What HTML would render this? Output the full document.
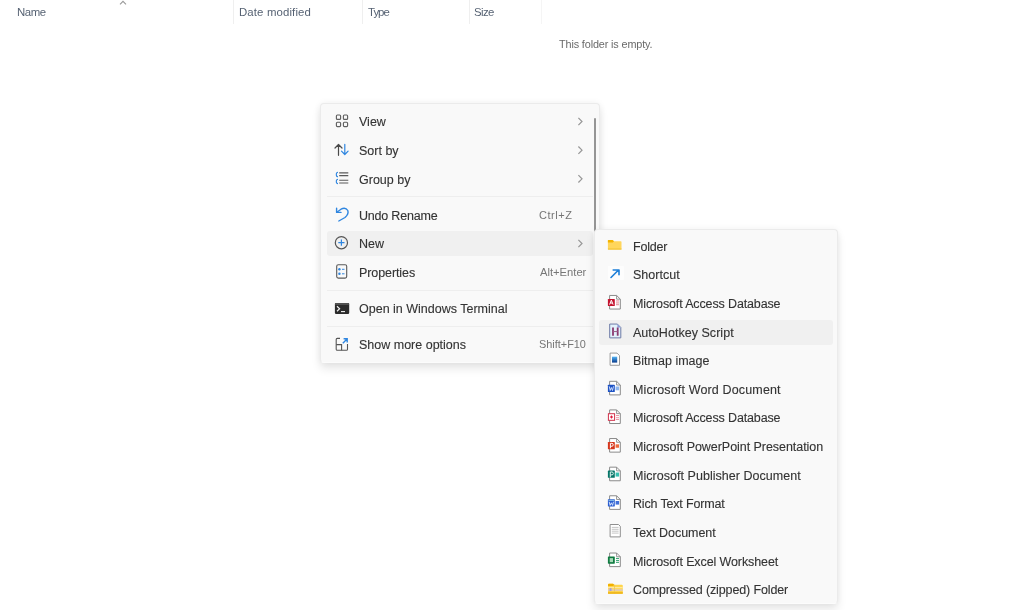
<!DOCTYPE html>
<html><head><meta charset="utf-8">
<style>
*{margin:0;padding:0;box-sizing:border-box}
html,body{width:1024px;height:610px;overflow:hidden;background:#fff;font-family:"Liberation Sans",sans-serif}
.txt,.sc,.hdr,.empty{will-change:transform}
.abs{position:absolute}
.hdr{position:absolute;top:4px;font-size:11.4px;line-height:16px;color:#566273;white-space:nowrap}
.col{position:absolute;top:0;width:1px;height:24px;background:#efefef}
.empty{position:absolute;left:558.5px;top:37.4px;letter-spacing:-0.13px;font-size:10.85px;line-height:14px;color:#6a6a6a;white-space:nowrap}
.menu{position:absolute;background:#f9f9f9;border-radius:4px;border:1px solid #ebebeb;border-bottom-color:#fcfcfc;box-shadow:0 0 7px rgba(0,0,0,0.06),0 6px 10px rgba(0,0,0,0.09)}
.hl{position:absolute;height:25px;border-radius:3px;background:#f0f0f0}
.txt{position:absolute;font-size:12.5px;line-height:25px;height:25px;color:#333333;-webkit-text-stroke:0.12px #333333;white-space:nowrap}
.sc{position:absolute;font-size:11px;line-height:25px;height:25px;color:#767676;white-space:nowrap}
.sep{position:absolute;height:1px;background:#eeeeee}
svg{position:absolute;overflow:visible}
</style></head>
<body>
<div class="hdr" style="left:17px;letter-spacing:-0.4px">Name</div>
<svg style="left:0;top:0" width="200" height="10"><path d="M120 4.4 L123 1.4 L126 4.4" fill="none" stroke="#999" stroke-width="1.1"/></svg>
<div class="col" style="left:233px"></div>
<div class="hdr" style="left:238.5px;letter-spacing:0.13px">Date modified</div>
<div class="col" style="left:362px"></div>
<div class="hdr" style="left:367.5px;letter-spacing:-0.95px">Type</div>
<div class="col" style="left:469px"></div>
<div class="hdr" style="left:474px;letter-spacing:-0.6px">Size</div>
<div class="col" style="left:541px;background:#f5f5f5"></div>
<div class="empty">This folder is empty.</div>

<div class="menu" style="left:320px;top:103px;width:280px;height:260px"></div>
<div class="abs" style="left:594.4px;top:117.5px;width:2px;height:114.5px;background:#959595;border-radius:1px"></div>
<div class="txt" style="left:359px;top:110.20px;letter-spacing:0.000px">View</div>
<div class="txt" style="left:359px;top:138.90px;letter-spacing:0.000px">Sort by</div>
<div class="txt" style="left:359px;top:167.50px;letter-spacing:0.000px">Group by</div>
<div class="txt" style="left:359px;top:203.50px;letter-spacing:-0.200px">Undo Rename</div>
<div class="sc" style="left:539.5px;top:202.60px;letter-spacing:0.55px;margin-left:-1px">Ctrl+Z</div>
<div class="hl" style="left:327px;top:231.20px;width:266px"></div>
<div class="txt" style="left:359px;top:232.20px;letter-spacing:0.000px">New</div>
<div class="txt" style="left:359px;top:260.90px;letter-spacing:-0.089px">Properties</div>
<div class="sc" style="left:539.5px;top:260.00px;font-size:11.2px">Alt+Enter</div>
<div class="txt" style="left:359px;top:296.90px;letter-spacing:0.000px">Open in Windows Terminal</div>
<div class="txt" style="left:359px;top:333.25px;letter-spacing:0.000px">Show more options</div>
<div class="sc" style="left:539.5px;top:332.35px;font-size:10.9px;margin-left:-1px">Shift+F10</div>
<div class="sep" style="left:327px;top:195.80px;width:266px"></div>
<div class="sep" style="left:327px;top:289.50px;width:266px"></div>
<div class="sep" style="left:327px;top:325.50px;width:266px"></div>
<svg style="left:0;top:0" width="1024" height="610">
  <g fill="none" stroke="#606060" stroke-width="1.15">
    <rect x="336.4" y="115" width="4.2" height="4.4" rx="1"/>
    <rect x="343.4" y="115" width="4.2" height="4.4" rx="1"/>
    <rect x="336.4" y="122.2" width="4.2" height="4.4" rx="1"/>
    <rect x="343.4" y="122.2" width="4.2" height="4.4" rx="1"/>
  </g>
  <g fill="none" stroke-width="1.2" stroke-linecap="round" stroke-linejoin="round">
    <path d="M338.5 155.3 V144.5 M335 148 L338.5 144.5 L342 148" stroke="#4a4a4a"/>
    <path d="M344.8 144.3 V154.5 M341.5 151.2 L344.8 154.5 L348.1 151.2" stroke="#2f86e0"/>
  </g>
  <g fill="none" stroke-width="1.1">
    <path d="M338 172.2 Q336.3 172.2 336.3 174.4 Q336.3 176.7 338 176.7 M338 179.2 Q336.3 179.2 336.3 181.4 Q336.3 183.6 338 183.6" stroke="#2f86e0"/>
    <path d="M339.2 172.9 H348.3 M339.2 175.6 H348.3 M339.2 180.2 H348.3 M339.2 183 H348.3" stroke="#5a5a5a"/>
  </g>
  <g fill="none" stroke="#2f86e0" stroke-width="1.4" stroke-linecap="round" stroke-linejoin="round">
    <path d="M336.6 208.3 V212.4 H341"/>
    <path d="M336.8 212.2 L341 209.2 Q345.5 206.8 347.8 210.5 Q349 214 345 217.5 L338.8 221"/>
  </g>
  <circle cx="341.4" cy="242.7" r="6.1" fill="none" stroke="#555" stroke-width="1.2"/>
  <path d="M341.4 239.6 V245.8 M338.3 242.7 H344.5" stroke="#2f86e0" stroke-width="1.2"/>
  <rect x="336.7" y="264.7" width="10" height="13.4" rx="1.6" fill="none" stroke="#5a5a5a" stroke-width="1.1"/>
  <circle cx="339.4" cy="269.3" r="1.2" fill="#2f86e0"/>
  <circle cx="339.4" cy="273.8" r="1.2" fill="#2f86e0"/>
  <path d="M342 269.3 H344.5 M342 273.8 H344.5" stroke="#2f86e0" stroke-width="1"/>
  <rect x="334.9" y="302.9" width="14.3" height="11" rx="1.2" fill="#2b2b2b"/>
  <rect x="334.9" y="302.9" width="14.3" height="2" rx="1" fill="#505050"/>
  <path d="M337 306.3 L339.6 308.8 L337 311.3" fill="none" stroke="#f2f2f2" stroke-width="1.2"/>
  <path d="M341 311.6 H345" stroke="#f2f2f2" stroke-width="1.1"/>
  <g fill="none" stroke="#555" stroke-width="1.1">
    <path d="M340 338.4 H337.3 Q336.2 338.4 336.2 339.5 V349.2 Q336.2 350.3 337.3 350.3 H346.4 Q347.5 350.3 347.5 349.2 V344"/>
    <path d="M336.2 344.6 H341.6 V350.3"/>
  </g>
  <path d="M342.8 343.3 L347 339 M343.6 338.8 H347.2 V342.4" fill="none" stroke="#2f86e0" stroke-width="1.4"/>
</svg>

<svg style="left:0;top:0" width="1024" height="610"><g fill="none" stroke="#979797" stroke-width="1.2"><path d="M578.4 117.80 L582 121.50 L578.4 125.20"/><path d="M578.4 146.50 L582 150.20 L578.4 153.90"/><path d="M578.4 175.10 L582 178.80 L578.4 182.50"/><path d="M578.4 239.80 L582 243.50 L578.4 247.20"/></g></svg>
<div class="menu" style="left:594px;top:229px;width:243.5px;height:375px"></div>
<div class="txt" style="left:633px;top:234.70px;letter-spacing:-0.200px">Folder</div>
<div class="txt" style="left:633px;top:263.32px;letter-spacing:0.029px">Shortcut</div>
<div class="txt" style="left:633px;top:291.94px;letter-spacing:-0.133px">Microsoft Access Database</div>
<div class="hl" style="left:599px;top:319.56px;width:233.5px"></div>
<div class="txt" style="left:633px;top:320.56px;letter-spacing:0.037px">AutoHotkey Script</div>
<div class="txt" style="left:633px;top:349.18px;letter-spacing:0.000px">Bitmap image</div>
<div class="txt" style="left:633px;top:377.80px;letter-spacing:0.150px">Microsoft Word Document</div>
<div class="txt" style="left:633px;top:406.42px;letter-spacing:-0.133px">Microsoft Access Database</div>
<div class="txt" style="left:633px;top:435.04px;letter-spacing:-0.050px">Microsoft PowerPoint Presentation</div>
<div class="txt" style="left:633px;top:463.66px;letter-spacing:0.037px">Microsoft Publisher Document</div>
<div class="txt" style="left:633px;top:492.28px;letter-spacing:-0.167px">Rich Text Format</div>
<div class="txt" style="left:633px;top:520.90px;letter-spacing:-0.058px">Text Document</div>
<div class="txt" style="left:633px;top:549.52px;letter-spacing:-0.104px">Microsoft Excel Worksheet</div>
<div class="txt" style="left:633px;top:578.14px;letter-spacing:-0.128px">Compressed (zipped) Folder</div>
<svg style="left:0;top:0" width="1024" height="610"><g transform="translate(606 237.20)"><path d="M1.9 3.4 Q1.9 2.7 2.6 2.7 H6.6 L8 4 H14.8 Q15.5 4 15.5 4.7 V11.7 Q15.5 12.4 14.8 12.4 H2.6 Q1.9 12.4 1.9 11.7 Z" fill="#ffd65c"/><path d="M1.9 3.4 Q1.9 2.7 2.6 2.7 H6.6 L8 4 L6.8 5.2 H1.9 Z" fill="#f4b400"/><rect x="1.9" y="11.3" width="13.6" height="1.1" fill="#f2c230"/></g><g transform="translate(606 265.82)"><rect x="1.9" y="0.3" width="16" height="13.8" fill="#fdfdfd"/><path d="M5 11.7 L12.5 4.2 M7.2 4.2 H13 V9" fill="none" stroke="#1e7fd8" stroke-width="1.6" stroke-linecap="round" stroke-linejoin="round"/></g><g transform="translate(606 294.44)"><path d="M3.6 1 H10.6 L14.3 4.7 V14.6 H3.6 Z" fill="#fff" stroke="#8a8a8a" stroke-width="1"/><path d="M10.6 1 V4.7 H14.3" fill="none" stroke="#8a8a8a" stroke-width="0.9"/><rect x="1.9" y="4.5" width="6.9" height="7.1" rx="0.6" fill="#c4122e"/><path d="M3.6 10.2 L5.35 5.7 L7.1 10.2 M4.3 8.6 H6.4" fill="none" stroke="#fff" stroke-width="1"/><path d="M10 6.5 H13 M10 8.5 H13 M10 10.3 H13" stroke="#e07a8a" stroke-width="0.9"/></g><g transform="translate(606 323.06)"><path d="M3.7 1 H11.4 L14.8 4.4 V14.8 H3.7 Z" fill="#e2f1fb" stroke="#6d7ba6" stroke-width="1"/><path d="M11.4 1 L14.8 4.4 H11.4 Z" fill="#8a9ad8"/><path d="M7 4.4 V12.6 M11.7 4.4 V12.6" fill="none" stroke="#8a3a70" stroke-width="1.8"/><path d="M7 8.5 H11.7" fill="none" stroke="#9a5a88" stroke-width="1"/></g><g transform="translate(606 351.68)"><path d="M4.1 1.4 H11 L13.5 3.9 V13.6 H4.1 Z" fill="#fff" stroke="#8f8f8f" stroke-width="0.9"/><defs><linearGradient id="bm" x1="0" y1="0" x2="0" y2="1"><stop offset="0" stop-color="#54b4f5"/><stop offset="1" stop-color="#083a8c"/></linearGradient></defs><rect x="6" y="5" width="5.2" height="5.9" fill="url(#bm)"/></g><g transform="translate(606 380.30)"><path d="M3.6 1 H10.6 L14.3 4.7 V14.6 H3.6 Z" fill="#fff" stroke="#8a8a8a" stroke-width="1"/><path d="M10.6 1 V4.7 H14.3" fill="none" stroke="#8a8a8a" stroke-width="0.9"/><rect x="1.9" y="4.4" width="6.9" height="7.3" rx="0.6" fill="#1d52c4"/><path d="M3.2 6 L4.2 10.2 L5.35 7.2 L6.5 10.2 L7.5 6" fill="none" stroke="#d8e4ff" stroke-width="0.9"/><rect x="9.6" y="6.2" width="3.5" height="3.8" fill="#8fb6ee"/></g><g transform="translate(606 408.92)"><path d="M3.6 1 H10.6 L14.3 4.7 V14.6 H3.6 Z" fill="#fff" stroke="#8a8a8a" stroke-width="1"/><path d="M10.6 1 V4.7 H14.3" fill="none" stroke="#8a8a8a" stroke-width="0.9"/><rect x="2.4" y="4.8" width="6.2" height="6.6" fill="#fff" stroke="#d0304a" stroke-width="1"/><path d="M5.5 6.3 L7 8.1 L5.5 9.9 L4 8.1 Z" fill="#e01a3c"/><path d="M10 6.6 H13 M10 8.8 H13 M10 10.6 H13" stroke="#e88898" stroke-width="0.9"/></g><g transform="translate(606 437.54)"><path d="M3.6 1 H10.6 L14.3 4.7 V14.6 H3.6 Z" fill="#fff" stroke="#8a8a8a" stroke-width="1"/><path d="M10.6 1 V4.7 H14.3" fill="none" stroke="#8a8a8a" stroke-width="0.9"/><rect x="1.9" y="4.4" width="6.9" height="7.3" rx="0.6" fill="#d5361c"/><path d="M4.4 10.8 V5.8 H5.9 Q7.2 5.8 7.2 7.3 Q7.2 8.7 5.9 8.7 H4.4" fill="none" stroke="#fff" stroke-width="1"/><rect x="9.6" y="6.8" width="3.4" height="3.4" fill="#ef6a3c"/></g><g transform="translate(606 466.16)"><path d="M3.6 1 H10.6 L14.3 4.7 V14.6 H3.6 Z" fill="#fff" stroke="#8a8a8a" stroke-width="1"/><path d="M10.6 1 V4.7 H14.3" fill="none" stroke="#8a8a8a" stroke-width="0.9"/><rect x="1.9" y="4.4" width="6.9" height="7.3" rx="0.6" fill="#077568"/><path d="M4.3 11.2 V5.8 H6 Q7.3 5.8 7.3 7.3 Q7.3 8.7 6 8.7 H4.3" fill="none" stroke="#e0f4f0" stroke-width="1"/><rect x="9.6" y="6.4" width="3.5" height="4" fill="#37c0b0"/></g><g transform="translate(606 494.78)"><path d="M3.6 1 H10.6 L14.3 4.7 V14.6 H3.6 Z" fill="#fff" stroke="#8a8a8a" stroke-width="1"/><path d="M10.6 1 V4.7 H14.3" fill="none" stroke="#8a8a8a" stroke-width="0.9"/><rect x="1.9" y="4.4" width="6.9" height="7.3" rx="0.4" fill="#2a5dd0"/><path d="M2.5 5.6 H8.2" stroke="#9fd8f0" stroke-width="0.8"/><path d="M3.2 7 L4.1 10.6 L5.35 8 L6.6 10.6 L7.5 7" fill="none" stroke="#e0ecff" stroke-width="0.9"/><rect x="9.6" y="6.2" width="3.5" height="3.6" fill="#3f6fd8"/></g><g transform="translate(606 523.40)"><path d="M4.1 1.1 H12.5 L14.3 2.9 V13.5 H4.1 Z" fill="#fff" stroke="#8f8f8f" stroke-width="1"/><path d="M5.8 4 H12.6 M5.8 5.9 H12.6 M5.8 7.8 H12.6 M5.8 9.7 H12.6" stroke="#b8b8b8" stroke-width="0.8"/></g><g transform="translate(606 552.02)"><path d="M3.6 1 H10.6 L14.3 4.7 V14.6 H3.6 Z" fill="#fff" stroke="#8a8a8a" stroke-width="1"/><path d="M10.6 1 V4.7 H14.3" fill="none" stroke="#8a8a8a" stroke-width="0.9"/><rect x="1.9" y="4.4" width="6.9" height="7.3" rx="0.6" fill="#107c41"/><rect x="3.7" y="6.1" width="3.3" height="4" fill="#a8d8b8"/><path d="M10 6.4 H13 M10 8.4 H13 M10 10.3 H13" stroke="#2ea06a" stroke-width="1"/></g><g transform="translate(606 580.64)"><g transform="translate(0 0.8)"><path d="M2 3.2 Q2 2.3 2.9 2.3 H7 L8.2 3.3 H15.9 Q16.8 3.3 16.8 4.2 V11.6 Q16.8 12.4 15.9 12.4 H2.9 Q2 12.4 2 11.6 Z" fill="#ffd54a"/><path d="M2 3.2 Q2 2.3 2.9 2.3 H7 L8.2 3.3 L7.2 4.6 H2 Z" fill="#f2b000"/><rect x="2" y="5.5" width="14.8" height="1.3" fill="#ffe9a0"/><rect x="2" y="7.9" width="14.8" height="1.4" fill="#d8c8d8" opacity="0.9"/><rect x="8" y="3.3" width="1" height="9.1" fill="#e8c060" opacity="0.7"/><rect x="3.6" y="6.6" width="1.9" height="3" fill="#a8a0d8"/><rect x="2" y="10.6" width="14.8" height="1.8" fill="#f0b820"/></g></g></svg>
</body></html>
